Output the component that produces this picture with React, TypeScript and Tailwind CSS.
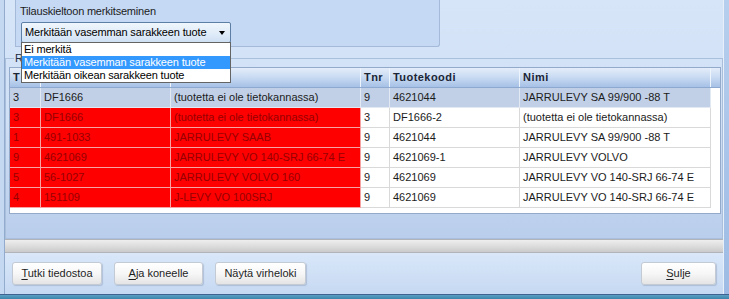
import React from "react";

type Row = {
  selected?: boolean;
  left: string[];
  right: string[];
};

const rows: Row[] = [
  { selected: true, left: ["3", "DF1666", "(tuotetta ei ole tietokannassa)"], right: ["9", "4621044", "JARRULEVY SA 99/900 -88 T"] },
  { left: ["3", "DF1666", "(tuotetta ei ole tietokannassa)"], right: ["3", "DF1666-2", "(tuotetta ei ole tietokannassa)"] },
  { left: ["1", "491-1033", "JARRULEVY SAAB"], right: ["9", "4621044", "JARRULEVY SA 99/900 -88 T"] },
  { left: ["9", "4621069", "JARRULEVY VO 140-SRJ 66-74 E"], right: ["9", "4621069-1", "JARRULEVY VOLVO"] },
  { left: ["5", "56-1027", "JARRULEVY VOLVO 160"], right: ["9", "4621069", "JARRULEVY VO 140-SRJ 66-74 E"] },
  { left: ["4", "151109", "J-LEVY VO 100SRJ"], right: ["9", "4621069", "JARRULEVY VO 140-SRJ 66-74 E"] },
];

// columns 2 and 3 are hidden behind the open dropdown
const headers = ["T", "", "", "Tnr", "Tuotekoodi", "Nimi"];
const colW = ["w-[31px]", "w-[130px]", "w-[190px]", "w-[29px]", "w-[130px]", "w-[191px]"];

function Button({ label, hotkey, width }: { label: string; hotkey?: boolean; width: string }) {
  return (
    <button
      className={`${width} h-[23px] rounded-[3px] border border-[#c3cad4] bg-gradient-to-b from-[#ffffff] via-[#f7f7f7] to-[#e4e4e4] text-[11px] text-[#1e1e1e] shadow-[1px_1px_1px_rgba(80,100,130,0.25)]`}
    >
      {hotkey ? (
        <>
          <u className="underline-offset-[2px]">{label[0]}</u>
          {label.slice(1)}
        </>
      ) : (
        label
      )}
    </button>
  );
}

export default function App() {
  return (
    <div className="w-[729px] h-[299px] overflow-hidden flex flex-col font-['Liberation_Sans',Arial,sans-serif] text-[11px] text-[#1b1b1b] bg-[#c9dcf4]">
      <div className="flex flex-1 min-h-0">
        {/* left window frame */}
        <div className="w-[5px] bg-[#c4d8f1] border-r border-[#93acce]" />

        <div className="flex-1 flex flex-col min-w-0">
          {/* upper form area */}
          <div className="flex flex-col bg-gradient-to-b from-[#d6e5f8] via-[#d0e0f5] to-[#b9ceec]">
            {/* top box */}
            <div className="ml-[10px] w-[425px] h-[47px] bg-[#c5d9f4] border-l border-r border-b border-[#a4bad8] rounded-br-[3px] flex flex-col">
              <div className="pl-[4px] pt-[5px] leading-[13px] tracking-[-0.2px] text-[#1c1c1c]">
                Tilauskieltoon merkitseminen
              </div>
              <div className="relative ml-[5px] mt-[4px] w-[210px] h-[21px] z-10">
                <div className="h-full flex items-center justify-between pl-[3px] pr-[5px] border border-[#5d7fa6] rounded-[2px] bg-gradient-to-b from-[#f0f6fc] via-[#e2edf9] to-[#cfe0f4] text-black tracking-[-0.15px]">
                  <span>Merkitään vasemman sarakkeen tuote</span>
                  <span className="w-0 h-0 border-l-[3.5px] border-r-[3.5px] border-t-[4px] border-l-transparent border-r-transparent border-t-black" />
                </div>
                {/* open dropdown list */}
                <div className="absolute left-0 top-[20px] w-[210px] bg-white border border-[#646464] text-black leading-[13px] tracking-[-0.15px]">
                  <div className="h-[13px] pl-[2px]">Ei merkitä</div>
                  <div className="h-[13px] pl-[2px] bg-[#3399ff] text-white">Merkitään vasemman sarakkeen tuote</div>
                  <div className="h-[13px] pl-[2px]">Merkitään oikean sarakkeen tuote</div>
                </div>
              </div>
            </div>

            {/* group box */}
            <div className="mt-[5px] flex flex-col">
              <div className="flex h-[13px]">
                <div className="w-[9px] h-[7px] self-end border-t border-l border-[#a9bfdc]" />
                <span className="px-[1px] leading-[13px] text-[#1c2b40]">Rivit</span>
                <div className="flex-1 h-[7px] self-end border-t border-r border-[#a9bfdc]" />
              </div>
              <div className="border-l border-r border-b border-[#a9bfdc] pb-[24px] pt-[2px]">
                {/* grid */}
                <div className="ml-[3px] w-[712px] h-[147px] border border-[#93aacb] bg-white flex flex-col">
                  <div className="flex h-[20px] bg-gradient-to-b from-[#e4edf9] via-[#c8daf2] to-[#a6c1e6] border-b border-[#8ea9cf]">
                    {headers.map((h, i) => (
                      <div
                        key={i}
                        className={`${colW[i]} shrink-0 border-r border-[#eef4fb] pl-[3px] font-bold tracking-[0.45px] leading-[19px] text-[#1a2536]`}
                      >
                        {h}
                      </div>
                    ))}
                  </div>
                  {rows.map((r, ri) => (
                    <div key={ri} className="flex h-[20px]">
                      {r.left.map((c, i) => (
                        <div
                          key={"l" + i}
                          className={`${colW[i]} shrink-0 pl-[3px] leading-[19px] border-r border-b whitespace-nowrap overflow-hidden ${
                            r.selected
                              ? "bg-[#c1d0e7] border-[#e2e9f3] text-[#1b1b1b]"
                              : "bg-[#ff0000] border-[#f7a3a3] text-[#960000]"
                          }`}
                        >
                          {c}
                        </div>
                      ))}
                      {r.right.map((c, i) => (
                        <div
                          key={"r" + i}
                          className={`${colW[i + 3]} shrink-0 pl-[3px] leading-[19px] border-r border-b whitespace-nowrap overflow-hidden ${
                            r.selected ? "bg-[#c1d0e7] border-[#e2e9f3]" : "bg-white border-[#d9d9d9]"
                          } text-[#1b1b1b]`}
                        >
                          {c}
                        </div>
                      ))}
                    </div>
                  ))}
                </div>
              </div>
            </div>
          </div>

          {/* progress bar */}
          <div className="h-[14px] border-t border-b border-[#b1b4b8] bg-gradient-to-b from-[#eeeeee] via-[#dddddd] to-[#cbcbcb]" />

          {/* bottom button panel */}
          <div className="flex-1 flex items-start justify-between pl-[7px] pr-[7px] pt-[9px] bg-gradient-to-b from-[#d9e7f9] to-[#c6d9f2]">
            <div className="flex gap-[12px]">
              <Button label="Tutki tiedostoa" hotkey width="w-[90px]" />
              <Button label="Aja koneelle" hotkey width="w-[89px]" />
              <Button label="Näytä virheloki" width="w-[91px]" />
            </div>
            <Button label="Sulje" hotkey width="w-[75px]" />
          </div>
        </div>

        {/* right window frame */}
        <div className="w-[6px] border-l border-[#e7eff9] bg-gradient-to-b from-[#b7cfee] to-[#9dbbe4]" />
      </div>
      {/* bottom window frame */}
      <div className="h-[5px] border-t border-[#3f628e] bg-gradient-to-b from-[#5d9fc4] to-[#3c84ab]" />
    </div>
  );
}
